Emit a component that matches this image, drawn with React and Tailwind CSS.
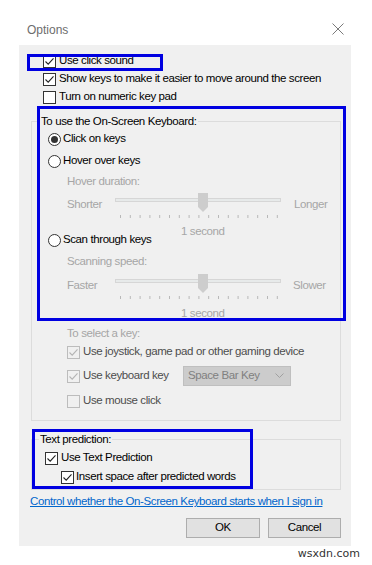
import React from "react";

const Check = ({ checked, disabled }) => (
  <span
    className={`flex h-[13px] w-[13px] shrink-0 items-center justify-center border ${
      disabled ? "border-[#bcbcbc] bg-[#f0f0f0]" : "border-[#333333] bg-white"
    }`}
  >
    {checked && (
      <svg width="11" height="11" viewBox="0 0 11 11">
        <path
          d="M1.5 5.5 L4.2 8.2 L9.5 2.3"
          fill="none"
          stroke={disabled ? "#b4b4b4" : "#222222"}
          strokeWidth="1.1"
        />
      </svg>
    )}
  </span>
);

const Radio = ({ checked }) => (
  <span className="flex h-[13px] w-[13px] shrink-0 items-center justify-center rounded-full border border-[#333333] bg-white">
    {checked && <span className="h-[7px] w-[7px] rounded-full bg-[#333333]" />}
  </span>
);

const Slider = () => {
  const ticks = [];
  for (let i = 0; i < 17; i++) {
    const x = 5.5 + i * 9.8;
    ticks.push(<line key={i} x1={x} y1="23" x2={x} y2="26" stroke="#b8b8b8" strokeWidth="1" />);
  }
  return (
    <svg width="166" height="28" viewBox="0 0 166 28" className="shrink-0">
      <rect x="0.5" y="6.5" width="165" height="3" fill="#e7eaea" stroke="#d6d6d6" />
      <polygon points="83,1 93,1 93,15 88,20 83,15" fill="#cdcdcd" />
      {ticks}
    </svg>
  );
};

export default function App() {
  return (
    <div
      className="relative h-[565px] w-[372px] overflow-hidden bg-white text-[11.5px] tracking-[-0.4px] text-black"
      style={{ fontFamily: '"Liberation Sans", Arial, sans-serif' }}
    >
      {/* title */}
      <div className="flex h-[45px] items-start justify-between pl-[27px] pr-[28px] pt-[23px]">
        <span className="text-[12px] leading-[14px] tracking-normal text-[#6d6d6d]">Options</span>
        <svg width="12" height="12" viewBox="0 0 12 12">
          <path d="M0.5 0.5 L11.5 11.5 M11.5 0.5 L0.5 11.5" stroke="#7a7a7a" strokeWidth="1" />
        </svg>
      </div>

      {/* dialog body */}
      <div className="ml-[19px] w-[332px] bg-[#f0f0f0] pb-[8px] pt-[7px]">
        <div className="ml-[24px] flex h-[18px] items-center gap-[3px]">
          <Check checked />
          <span>Use click sound</span>
        </div>
        <div className="ml-[24px] flex h-[18px] items-center gap-[3px]">
          <Check checked />
          <span>Show keys to make it easier to move around the screen</span>
        </div>
        <div className="ml-[24px] flex h-[18px] items-center gap-[3px]">
          <Check />
          <span>Turn on numeric key pad</span>
        </div>

        {/* on-screen keyboard group */}
        <div className="ml-[12px] mt-[15px] w-[310px] border border-[#dcdcdc] pb-[6px]">
          <div className="-mt-[8px] ml-[8px] w-fit bg-[#f0f0f0] px-[1px] leading-[14px]">
            To use the On-Screen Keyboard:
          </div>
          <div className="ml-[16px] flex h-[22px] items-center gap-[2px]">
            <Radio checked />
            <span>Click on keys</span>
          </div>
          <div className="ml-[16px] flex h-[22px] items-center gap-[2px]">
            <Radio />
            <span>Hover over keys</span>
          </div>
          <div className="ml-[35px] flex h-[20px] items-center text-[#a6a6a6]">Hover duration:</div>
          <div className="ml-[35px] flex h-[28px] items-start text-[#a6a6a6]">
            <span className="mt-[5px] w-[48px] leading-[14px]">Shorter</span>
            <Slider />
            <span className="ml-[13px] mt-[5px] leading-[14px]">Longer</span>
          </div>
          <div className="ml-[149px] mt-[4px] h-[14px] leading-[14px] text-[#a6a6a6]">1 second</div>
          <div className="ml-[16px] -mt-[9px] flex h-[22px] w-fit items-center gap-[2px]">
            <Radio />
            <span>Scan through keys</span>
          </div>
          <div className="ml-[35px] flex h-[22px] items-center text-[#a6a6a6]">Scanning speed:</div>
          <div className="ml-[35px] flex h-[28px] items-start text-[#a6a6a6]">
            <span className="mt-[5px] w-[48px] leading-[14px]">Faster</span>
            <Slider />
            <span className="ml-[12px] mt-[5px] leading-[14px]">Slower</span>
          </div>
          <div className="ml-[149px] mt-[5px] h-[14px] leading-[14px] text-[#a6a6a6]">1 second</div>
          <div className="ml-[35px] mt-[6px] h-[14px] leading-[14px] text-[#a6a6a6]">To select a key:</div>
          <div className="ml-[35px] flex h-[24px] items-center gap-[3px] text-[#4d4d4d]">
            <Check checked disabled />
            <span>Use joystick, game pad or other gaming device</span>
          </div>
          <div className="ml-[35px] flex h-[24px] items-center text-[#4d4d4d]">
            <Check checked disabled />
            <span className="ml-[3px] w-[100px] shrink-0 whitespace-nowrap">Use keyboard key</span>
            <div className="flex h-[20px] w-[108px] items-center justify-between border border-[#bfbfbf] bg-[#cccccc] pl-[4px] pr-[6px] text-[#808080]">
              <span className="whitespace-nowrap">Space Bar Key</span>
              <svg width="9" height="6" viewBox="0 0 9 6">
                <path d="M0.5 0.5 L4.5 4.5 L8.5 0.5" fill="none" stroke="#a0a0a0" strokeWidth="1" />
              </svg>
            </div>
          </div>
          <div className="ml-[35px] flex h-[26px] items-center gap-[3px] text-[#4d4d4d]">
            <Check disabled />
            <span>Use mouse click</span>
          </div>
        </div>

        {/* text prediction group */}
        <div className="ml-[12px] mt-[18px] w-[310px] border border-[#dcdcdc] pb-[5px]">
          <div className="-mt-[8px] ml-[7px] w-fit bg-[#f0f0f0] px-[1px] leading-[14px]">Text prediction:</div>
          <div className="ml-[13px] flex h-[24px] items-center gap-[3px]">
            <Check checked />
            <span>Use Text Prediction</span>
          </div>
          <div className="ml-[29px] flex h-[14px] items-center gap-[2px]">
            <Check checked />
            <span>Insert space after predicted words</span>
          </div>
        </div>

        <div className="ml-[11px] mt-[4px] leading-[14px] text-[#0066cc] underline">
          Control whether the On-Screen Keyboard starts when I sign in
        </div>

        <div className="mt-[10px] flex justify-end gap-[8px] pr-[10px]">
          <button className="h-[20px] w-[74px] border border-[#adadad] bg-[#e1e1e1] text-[11.5px]">OK</button>
          <button className="h-[20px] w-[73px] border border-[#adadad] bg-[#e1e1e1] text-[11.5px]">Cancel</button>
        </div>
      </div>

      <div
        className="mt-[1px] pr-[12px] text-right text-[11px] leading-[14px] tracking-normal text-[#333333]"
        style={{ fontFamily: '"DejaVu Sans", sans-serif' }}
      >
        wsxdn.com
      </div>

      {/* annotation boxes */}
      <div className="absolute left-[27px] top-[54px] h-[17px] w-[136px] border-[3px] border-[#0000e1]" />
      <div className="absolute left-[37px] top-[106px] h-[215px] w-[309px] border-[3px] border-[#0000e1]" />
      <div className="absolute left-[32px] top-[429px] h-[60px] w-[221px] border-[3px] border-[#0000e1]" />
    </div>
  );
}
